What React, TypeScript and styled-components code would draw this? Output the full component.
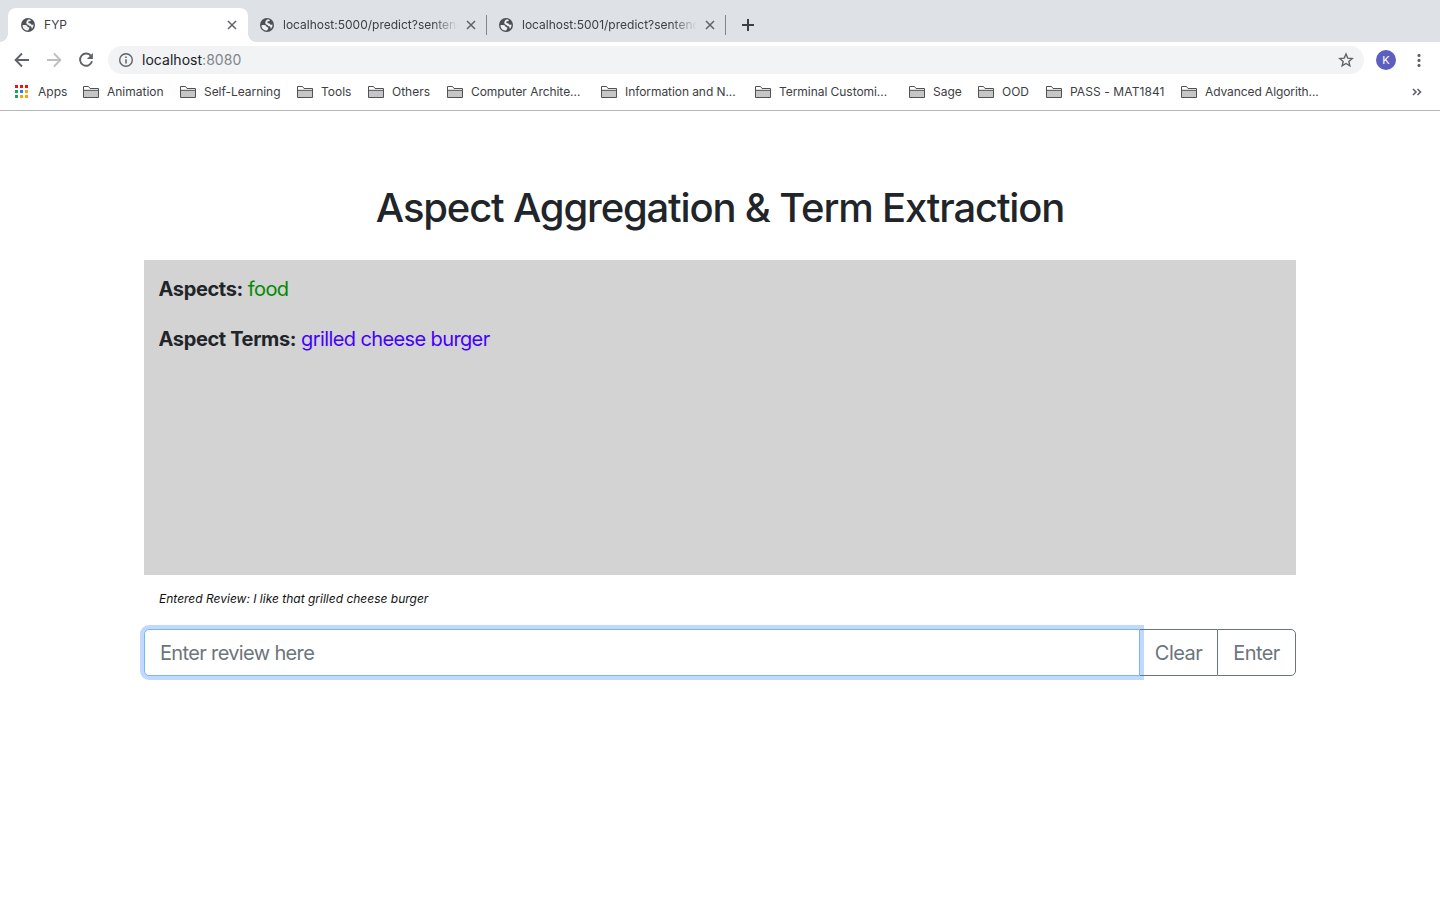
import React from "react";
import styled, { createGlobalStyle } from "styled-components";

const GlobalStyle = createGlobalStyle`
  * { box-sizing: border-box; }
  body { margin: 0; background: #fff; font-family: Inter, "Liberation Sans", sans-serif; }
  svg { display: block; flex: none; }
  button, input { font-family: inherit; }
`;

const Window = styled.div`
  height: 900px;
  overflow: hidden;
  background: #fff;
`;

const TabStrip = styled.div`
  display: flex;
  align-items: flex-end;
  height: 42px;
  padding-left: 8px;
  background: #dee1e6;
`;

const Tab = styled.div<{ $active?: boolean }>`
  position: relative;
  display: flex;
  align-items: center;
  width: ${(p) => (p.$active ? 240 : 239)}px;
  height: 34px;
  padding: 0 10px 0 ${(p) => (p.$active ? 12 : 11)}px;
  border-radius: 8px 8px 0 0;
  background: ${(p) => (p.$active ? "#fff" : "transparent")};
  ${(p) =>
    p.$active &&
    `&::before, &::after {
      content: "";
      position: absolute;
      bottom: 0;
      width: 8px;
      height: 8px;
    }
    &::before { left: -8px; background: radial-gradient(circle at 0 0, transparent 7.5px, #fff 8px); }
    &::after { right: -8px; background: radial-gradient(circle at 100% 0, transparent 7.5px, #fff 8px); }`}
`;

const TabTitle = styled.span<{ $fade?: boolean }>`
  flex: 1;
  margin: 0 7px 0 8px;
  overflow: hidden;
  white-space: nowrap;
  font-size: 12px;
  line-height: 16px;
  letter-spacing: ${(p) => (p.$fade ? 0 : 0.05)}px;
  color: #3c4043;
  ${(p) => p.$fade && `mask-image: linear-gradient(to right, #000 calc(100% - 26px), transparent);`}
`;

const TabDivider = styled.span`
  align-self: center;
  width: 1px;
  height: 20px;
  margin: 8px 0 0 -1px;
  background: #80868b;
`;

const NewTab = styled.span`
  display: flex;
  align-items: center;
  height: 34px;
  margin-left: 15px;
`;

const Toolbar = styled.div`
  display: flex;
  align-items: center;
  height: 36px;
  padding: 0 12px 0 14px;
`;

const NavIcons = styled.div`
  display: flex;
  gap: 16px;
  width: 94px;
`;

const AddressBar = styled.div`
  display: flex;
  align-items: center;
  width: 1256px;
  height: 28px;
  padding: 0 10px;
  border-radius: 14px;
  background: #f1f3f4;
`;

const Url = styled.span`
  flex: 1;
  margin-left: 8px;
  font-size: 14px;
  line-height: 20px;
  letter-spacing: 0.03px;
  color: #202124;
  span { color: #80868b; }
`;

const Avatar = styled.span`
  width: 20px;
  height: 20px;
  margin: 0 14.500px 0 12px;
  border-radius: 50%;
  background: #5c5fc0;
  color: #fff;
  font-size: 11px;
  line-height: 20px;
  text-align: center;
`;

const BookmarkBar = styled.div`
  display: flex;
  align-items: center;
  height: 33px;
  padding: 0 17px 5px 15px;
  border-bottom: 1px solid #b6b7b9;
`;

const Bookmark = styled.span<{ $width: number; $tracking?: number }>`
  display: flex;
  align-items: center;
  gap: 8px;
  width: ${(p) => p.$width}px;
  font-size: 12px;
  line-height: 16px;
  letter-spacing: ${(p) => p.$tracking ?? 0}px;
  white-space: nowrap;
  color: #3c4043;
`;

const AppsIcon = styled.span`
  display: grid;
  grid-template-columns: repeat(3, 3px);
  gap: 2px;
  margin-right: 2px;
  i { height: 3px; }
`;

const Overflow = styled.span`
  margin-left: auto;
`;

const Page = styled.main`
  width: 1152px;
  margin: 0 auto;
  padding-top: 73px;
`;

const Title = styled.h1`
  margin: 0;
  font-size: 40px;
  line-height: 48px;
  font-weight: 500;
  letter-spacing: -1.170px;
  text-align: center;
  white-space: nowrap;
  color: #212529;
`;

const Results = styled.section`
  height: 315px;
  margin-top: 28px;
  padding: 14px 14.500px;
  background: #d3d3d3;
`;

const Result = styled.p<{ $color: string }>`
  margin: 0 0 20px;
  font-size: 20px;
  line-height: 30px;
  letter-spacing: -0.610px;
  color: ${(p) => p.$color};
  b { font-weight: 700; letter-spacing: -0.370px; color: #212529; }
`;

const Entered = styled.p`
  margin: 15px 15px 21px;
  font-size: 12px;
  line-height: 18px;
  font-style: italic;
  color: #111;
`;

const InputGroup = styled.form`
  display: flex;
  height: 47px;
`;

const ReviewInput = styled.input`
  flex: 1;
  min-width: 0;
  padding: 0 15px;
  border: 1px solid #78b6fa;
  border-radius: 5px 0 0 5px;
  outline: none;
  box-shadow: 0 0 0 4px #c1d9fe;
  background: #fff;
  font-size: 20px;
  letter-spacing: -0.650px;
  &::placeholder { color: #6c757d; opacity: 1; }
`;

const GroupButton = styled.button<{ $last?: boolean }>`
  width: ${(p) => (p.$last ? 79 : 77)}px;
  padding: 0;
  border: 1px solid #6c757d;
  border-left-width: ${(p) => (p.$last ? 1 : 0)}px;
  border-right-width: ${(p) => (p.$last ? 1 : 0)}px;
  border-radius: ${(p) => (p.$last ? "0 5px 5px 0" : "0")};
  position: relative;
  background: transparent;
  font-size: 20px;
  letter-spacing: -0.550px;
  color: #6c757d;
`;

const Globe = () => (
  <svg width="16" height="16" viewBox="0 0 16 16">
    <circle cx="8" cy="8" r="7" fill="#4d5156" />
    <path
      d="M2.500 8.200C4 7.700 6.500 7.700 7.300 9c.3.500.2 1.200.9 1.300h1v1.500c-.1.700-.9.700-.9 1.300v.5C5 13.700 2.400 11.500 2.500 8.200zM8.200 2.500c.8-.1 1.800 0 2.600.4 0 .9-.5 1.400-1.300 1.400-.7.100-1.200.3-1.200 1 0 .8.6 1 1.500 1 .9.100 1.100.6 1.400 1.200.5.400 1.300.3 2.300.1.100 1.600-.5 3-1.500 4.100-.6-.300-.2-1.500-.8-2C10.300 9.200 9.300 9.300 8.600 8.300 8 7.500 6.400 7.600 6.300 6c0-1.500.6-2.500 1.900-3.500z"
      fill="#eef0f2"
    />
  </svg>
);

const Close = () => (
  <svg width="12" height="12" viewBox="0 0 12 12" stroke="#5f6368" strokeWidth="1.5">
    <path d="M2 2l8 8M10 2l-8 8" />
  </svg>
);

const Arrow = ({ color, flip }: { color: string; flip?: boolean }) => (
  <svg width="16" height="16" viewBox="0 0 16 16" fill="none" stroke={color} strokeWidth="1.9">
    <path d={flip ? "M1 8h13M8 1.500l6.400 6.500L8 14.500" : "M15 8H2M8 1.500L1.600 8 8 14.500"} />
  </svg>
);

const Reload = () => (
  <svg width="16" height="16" viewBox="0 0 16 16">
    <path d="M13.100 4.100A6.100 6.100 0 1 0 14 9.300" fill="none" stroke="#5f6368" strokeWidth="1.9" />
    <path d="M14.900 1v6H8.900z" fill="#5f6368" />
  </svg>
);

const Info = () => (
  <svg width="16" height="16" viewBox="0 0 16 16">
    <circle cx="8" cy="8" r="6.300" fill="none" stroke="#5f6368" strokeWidth="1.400" />
    <path d="M7.250 7.200h1.500v4.200h-1.500zM7.250 4.500h1.500V6h-1.500z" fill="#5f6368" />
  </svg>
);

const Star = () => (
  <svg width="16" height="16" viewBox="0 0 16 16" fill="none" stroke="#5f6368" strokeWidth="1.400">
    <path d="M8 2l1.750 4.100 4.450.4-3.370 2.920 1.010 4.350L8 11.460l-3.840 2.310 1.010-4.350L1.800 6.500l4.450-.4z" />
  </svg>
);

const Menu = () => (
  <svg width="16" height="16" viewBox="0 0 16 16" fill="#5f6368">
    <circle cx="8" cy="3.400" r="1.550" />
    <circle cx="8" cy="8.400" r="1.550" />
    <circle cx="8" cy="13.400" r="1.550" />
  </svg>
);

const Folder = () => (
  <svg width="16" height="14" viewBox="0 0 16 14">
    <path d="M.5 5h15v7.500H.5z" fill="#c6c6c6" />
    <path d="M.5 12.500V1.500h5l1.500 2h8.500v9zM.5 5.300h15" fill="none" stroke="#505255" strokeWidth="1" />
  </svg>
);

const appColors = ["#f80d0d", "#f80d0d", "#f80d0d", "#0fa958", "#1683f8", "#f9a10a", "#0fa958", "#f9a10a", "#f9a10a"];

const bookmarks: [string, number, number?][] = [
  ["Animation", 97],
  ["Self-Learning", 117, -0.04],
  ["Tools", 71],
  ["Others", 79],
  ["Computer Archite...", 154, -0.05],
  ["Information and N...", 154, -0.07],
  ["Terminal Customi...", 154, -0.05],
  ["Sage", 69],
  ["OOD", 68],
  ["PASS - MAT1841", 135, 0.09],
  ["Advanced Algorith...", 154, -0.09],
];

export default function App() {
  return (
    <Window>
      <GlobalStyle />
      <TabStrip>
        <Tab $active>
          <Globe />
          <TabTitle>FYP</TabTitle>
          <Close />
        </Tab>
        <Tab>
          <Globe />
          <TabTitle $fade>localhost:5000/predict?sentenc</TabTitle>
          <Close />
        </Tab>
        <TabDivider />
        <Tab>
          <Globe />
          <TabTitle $fade>localhost:5001/predict?sentenc</TabTitle>
          <Close />
        </Tab>
        <TabDivider />
        <NewTab>
          <svg width="14" height="14" viewBox="0 0 14 14" stroke="#3c4043" strokeWidth="2">
            <path d="M7 1v12M1 7h12" />
          </svg>
        </NewTab>
      </TabStrip>
      <Toolbar>
        <NavIcons>
          <Arrow color="#5f6368" />
          <Arrow color="#bdbfc1" flip />
          <Reload />
        </NavIcons>
        <AddressBar>
          <Info />
          <Url>
            localhost<span>:8080</span>
          </Url>
          <Star />
        </AddressBar>
        <Avatar>K</Avatar>
        <Menu />
      </Toolbar>
      <BookmarkBar>
        <Bookmark $width={68}>
          <AppsIcon>
            {appColors.map((c, i) => (
              <i key={i} style={{ background: c }} />
            ))}
          </AppsIcon>
          Apps
        </Bookmark>
        {bookmarks.map(([label, width, tracking]) => (
          <Bookmark key={label} $width={width} $tracking={tracking}>
            <Folder />
            {label}
          </Bookmark>
        ))}
        <Overflow>
          <svg width="12" height="10" viewBox="0 0 12 10" fill="none" stroke="#5f6368" strokeWidth="1.600">
            <path d="M2 2l3 3-3 3M6.500 2l3 3-3 3" />
          </svg>
        </Overflow>
      </BookmarkBar>
      <Page>
        <Title>Aspect Aggregation &amp; Term Extraction</Title>
        <Results>
          <Result $color="#008a00">
            <b>Aspects:</b> food
          </Result>
          <Result $color="#4400ff">
            <b>Aspect Terms:</b> grilled cheese burger
          </Result>
        </Results>
        <Entered>Entered Review: I like that grilled cheese burger</Entered>
        <InputGroup>
          <ReviewInput placeholder="Enter review here" />
          <GroupButton type="button">Clear</GroupButton>
          <GroupButton type="button" $last>
            Enter
          </GroupButton>
        </InputGroup>
      </Page>
    </Window>
  );
}
